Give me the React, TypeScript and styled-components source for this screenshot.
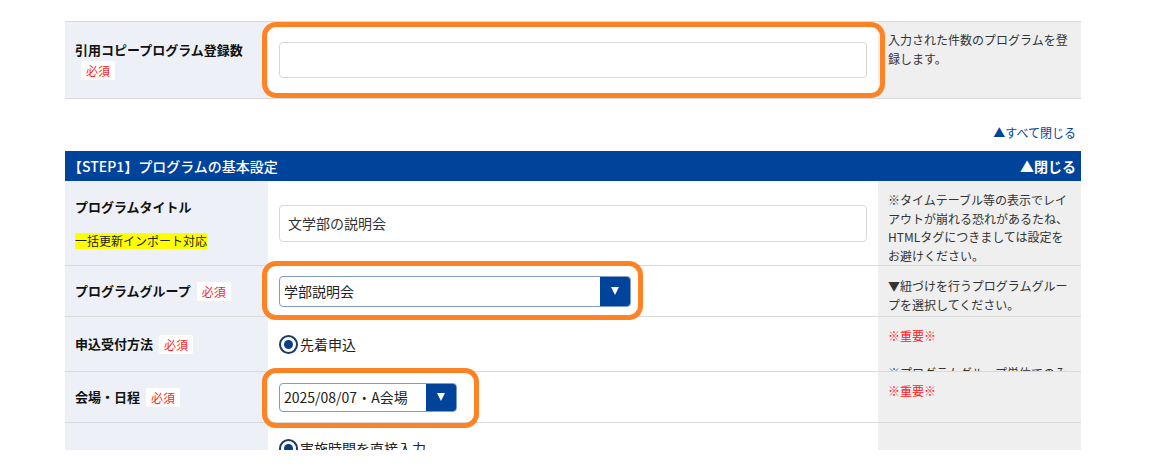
import React from "react";
import styled, { createGlobalStyle } from "styled-components";

const GlobalStyle = createGlobalStyle`
  html, body { margin: 0; padding: 0; background: #fff; }
  body {
    font-family: "Noto Sans CJK JP", "Noto Sans", "Liberation Sans", sans-serif;
    color: #222;
  }
  * { box-sizing: border-box; }
`;

const Page = styled.div`
  width: 1161px;
  height: 450px;
  overflow: hidden;
  padding: 21px 0 0 65px;
`;

const Table = styled.div`
  width: 1016px;
`;

const Row = styled.div<{ $h: number; $top?: boolean }>`
  display: grid;
  grid-template-columns: 203px 610px 203px;
  height: ${(p) => p.$h}px;
  border-bottom: 1px solid #d9d9d9;
  border-top: ${(p) => (p.$top ? "1px solid #d9d9d9" : "none")};
`;

const LabelCell = styled.div`
  background: #edf1f7;
  padding: 0 10px;
  display: flex;
  flex-direction: column;
  justify-content: center;
  align-items: flex-start;
`;

const LabelText = styled.div`
  font-size: 13px;
  font-weight: 700;
  line-height: 20px;
  color: #111;
`;

const Badge = styled.span`
  display: inline-block;
  margin-left: 6px;
  padding: 0 5px;
  background: #fff;
  color: #ff1f1f;
  font-size: 12px;
  font-weight: 400;
  line-height: 19px;
  border-radius: 2px;
  vertical-align: middle;
`;

const Marker = styled.span`
  margin-top: 16px;
  background: #ffff00;
  font-size: 12px;
  line-height: 16px;
  color: #222;
`;

const InputCell = styled.div<{ $alignTop?: boolean }>`
  position: relative;
  display: flex;
  align-items: ${(p) => (p.$alignTop ? "flex-start" : "center")};
  padding: ${(p) => (p.$alignTop ? "15px 11px 0" : "0 11px")};
`;

const TextInput = styled.div<{ $h: number }>`
  width: 100%;
  height: ${(p) => p.$h}px;
  border: 1px solid #d8d8d8;
  border-radius: 4px;
  background: #fff;
  padding: 0 8px;
  display: flex;
  align-items: center;
  font-size: 14px;
  color: #333;
`;

const SelectBox = styled.div<{ $w: number; $h: number }>`
  width: ${(p) => p.$w}px;
  height: ${(p) => p.$h}px;
  border: 1px solid #7f9cc6;
  border-radius: 4px;
  overflow: hidden;
  display: flex;
  background: #fff;
`;

const SelectValue = styled.span`
  flex: 1;
  display: flex;
  align-items: center;
  padding-left: 4px;
  font-size: 14px;
  color: #222;
`;

const SelectArrow = styled.span`
  width: 30px;
  background: #00439a;
  display: flex;
  align-items: center;
  justify-content: center;
  &::after {
    content: "";
    width: 0;
    height: 0;
    border-left: 4.5px solid transparent;
    border-right: 4.5px solid transparent;
    border-top: 8px solid #fff;
  }
`;

const RadioLabel = styled.span`
  display: inline-flex;
  align-items: center;
  gap: 2px;
  font-size: 14px;
  color: #222;
  line-height: 20px;
`;

const RadioCircle = styled.span`
  width: 19px;
  height: 19px;
  border-radius: 50%;
  border: 2px solid #1d3a66;
  background: #fff;
  display: flex;
  align-items: center;
  justify-content: center;
  &::after {
    content: "";
    width: 9px;
    height: 9px;
    border-radius: 50%;
    background: #0a3d87;
  }
`;

const NoteCell = styled.div<{ $pt?: number }>`
  background: #efefef;
  padding: ${(p) => p.$pt ?? 10}px 10px 0;
  font-size: 12px;
  line-height: 18.6px;
  color: #333;
  overflow: hidden;
`;

const Important = styled.span`
  color: #ff2020;
`;

const Annotation = styled.div<{ $l: number; $t: number; $w: number; $h: number }>`
  position: absolute;
  left: ${(p) => p.$l}px;
  top: ${(p) => p.$t}px;
  width: ${(p) => p.$w}px;
  height: ${(p) => p.$h}px;
  border: 5px solid #ff8224;
  border-radius: 14px;
  pointer-events: none;
  z-index: 2;
`;

const CollapseAll = styled.div`
  width: 1016px;
  margin: 25px 0 9px;
  padding-right: 5px;
  text-align: right;
  font-size: 12px;
  line-height: 18px;
  color: #00439a;
`;

const SectionHeader = styled.div`
  height: 30px;
  background: #00439a;
  color: #fff;
  display: flex;
  align-items: center;
  justify-content: space-between;
  padding: 0 5px 0 3px;
`;

const SectionTitle = styled.span`
  font-size: 14px;
  font-weight: 500;
`;

const SectionClose = styled.span`
  font-size: 14px;
  font-weight: 700;
`;

export default function App() {
  return (
    <>
      <GlobalStyle />
      <Page>
        <Table>
          <Row $h={78} $top>
            <LabelCell>
              <LabelText>
                引用コピープログラム登録数
                <Badge>必須</Badge>
              </LabelText>
            </LabelCell>
            <InputCell>
              <TextInput $h={36} />
              <Annotation $l={-6} $t={0} $w={623} $h={76} />
            </InputCell>
            <NoteCell $pt={9}>入力された件数のプログラムを登録します。</NoteCell>
          </Row>
        </Table>

        <CollapseAll>▲すべて閉じる</CollapseAll>

        <Table>
          <SectionHeader>
            <SectionTitle>【STEP1】プログラムの基本設定</SectionTitle>
            <SectionClose>▲閉じる</SectionClose>
          </SectionHeader>

          <Row $h={85}>
            <LabelCell>
              <LabelText>プログラムタイトル</LabelText>
              <Marker>一括更新インポート対応</Marker>
            </LabelCell>
            <InputCell>
              <TextInput $h={37}>文学部の説明会</TextInput>
            </InputCell>
            <NoteCell $pt={10}>
              ※タイムテーブル等の表示でレイアウトが崩れる恐れがあるたね、HTMLタグにつきましては設定をお避けください。
            </NoteCell>
          </Row>

          <Row $h={51}>
            <LabelCell>
              <LabelText>
                プログラムグループ
                <Badge>必須</Badge>
              </LabelText>
            </LabelCell>
            <InputCell>
              <SelectBox $w={352} $h={31}>
                <SelectValue>学部説明会</SelectValue>
                <SelectArrow />
              </SelectBox>
              <Annotation $l={-6} $t={-5} $w={381} $h={59} />
            </InputCell>
            <NoteCell $pt={11}>▼紐づけを行うプログラムグループを選択してください。</NoteCell>
          </Row>

          <Row $h={55}>
            <LabelCell>
              <LabelText>
                申込受付方法
                <Badge>必須</Badge>
              </LabelText>
            </LabelCell>
            <InputCell>
              <RadioLabel>
                <RadioCircle />
                先着申込
              </RadioLabel>
            </InputCell>
            <NoteCell $pt={10}>
              <Important>※重要※</Important>
              <br />
              <br />
              ※プログラムグループ単位でのみ申込受付方法を設定できます。
            </NoteCell>
          </Row>

          <Row $h={51}>
            <LabelCell>
              <LabelText>
                会場・日程
                <Badge>必須</Badge>
              </LabelText>
            </LabelCell>
            <InputCell>
              <SelectBox $w={178} $h={29}>
                <SelectValue>2025/08/07・A会場</SelectValue>
                <SelectArrow />
              </SelectBox>
              <Annotation $l={-6} $t={-4} $w={217} $h={60} />
            </InputCell>
            <NoteCell $pt={10}>
              <Important>※重要※</Important>
            </NoteCell>
          </Row>

          <Row $h={60}>
            <LabelCell />
            <InputCell $alignTop>
              <RadioLabel>
                <RadioCircle />
                実施時間を直接入力
              </RadioLabel>
            </InputCell>
            <NoteCell />
          </Row>
        </Table>
      </Page>
    </>
  );
}
